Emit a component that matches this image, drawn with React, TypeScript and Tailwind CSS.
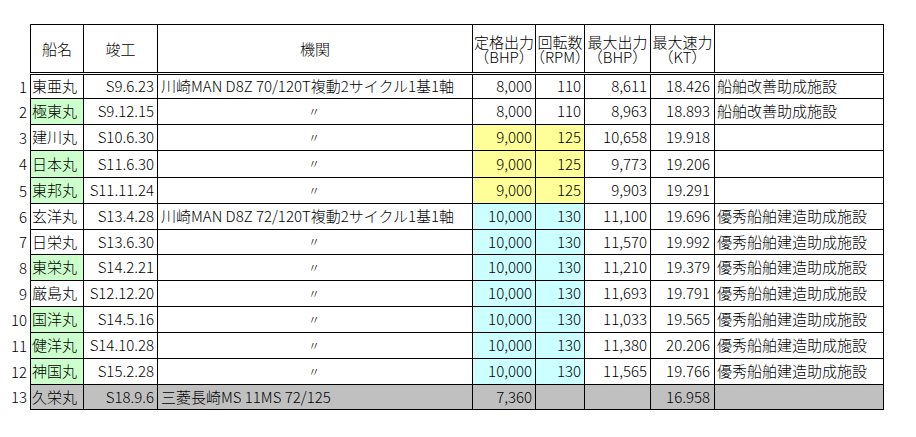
type Ship = {
  no: number;
  name: string;
  done: string;
  engine: string;
  bhp: string;
  rpm: string;
  maxBhp: string;
  kt: string;
  note: string;
  nameBg?: "green";
  powerBg?: "yellow" | "cyan";
  h: string;
  gray?: boolean;
};

const DITTO = "〃";
const NOTE1 = "船舶改善助成施設";
const NOTE2 = "優秀船舶建造助成施設";

const ships: Ship[] = [
  { no: 1, name: "東亜丸", done: "S9.6.23", engine: "川崎MAN D8Z 70/120T複動2サイクル1基1軸", bhp: "8,000", rpm: "110", maxBhp: "8,611", kt: "18.426", note: NOTE1, h: "h-[24px]" },
  { no: 2, name: "極東丸", done: "S9.12.15", engine: DITTO, bhp: "8,000", rpm: "110", maxBhp: "8,963", kt: "18.893", note: NOTE1, nameBg: "green", h: "h-[26px]" },
  { no: 3, name: "建川丸", done: "S10.6.30", engine: DITTO, bhp: "9,000", rpm: "125", maxBhp: "10,658", kt: "19.918", note: "", powerBg: "yellow", h: "h-[26px]" },
  { no: 4, name: "日本丸", done: "S11.6.30", engine: DITTO, bhp: "9,000", rpm: "125", maxBhp: "9,773", kt: "19.206", note: "", nameBg: "green", powerBg: "yellow", h: "h-[27px]" },
  { no: 5, name: "東邦丸", done: "S11.11.24", engine: DITTO, bhp: "9,000", rpm: "125", maxBhp: "9,903", kt: "19.291", note: "", nameBg: "green", powerBg: "yellow", h: "h-[26px]" },
  { no: 6, name: "玄洋丸", done: "S13.4.28", engine: "川崎MAN D8Z 72/120T複動2サイクル1基1軸", bhp: "10,000", rpm: "130", maxBhp: "11,100", kt: "19.696", note: NOTE2, powerBg: "cyan", h: "h-[26px]" },
  { no: 7, name: "日栄丸", done: "S13.6.30", engine: DITTO, bhp: "10,000", rpm: "130", maxBhp: "11,570", kt: "19.992", note: NOTE2, powerBg: "cyan", h: "h-[25px]" },
  { no: 8, name: "東栄丸", done: "S14.2.21", engine: DITTO, bhp: "10,000", rpm: "130", maxBhp: "11,210", kt: "19.379", note: NOTE2, nameBg: "green", powerBg: "cyan", h: "h-[26px]" },
  { no: 9, name: "厳島丸", done: "S12.12.20", engine: DITTO, bhp: "10,000", rpm: "130", maxBhp: "11,693", kt: "19.791", note: NOTE2, powerBg: "cyan", h: "h-[26px]" },
  { no: 10, name: "国洋丸", done: "S14.5.16", engine: DITTO, bhp: "10,000", rpm: "130", maxBhp: "11,033", kt: "19.565", note: NOTE2, nameBg: "green", powerBg: "cyan", h: "h-[26px]" },
  { no: 11, name: "健洋丸", done: "S14.10.28", engine: DITTO, bhp: "10,000", rpm: "130", maxBhp: "11,380", kt: "20.206", note: NOTE2, nameBg: "green", powerBg: "cyan", h: "h-[26px]" },
  { no: 12, name: "神国丸", done: "S15.2.28", engine: DITTO, bhp: "10,000", rpm: "130", maxBhp: "11,565", kt: "19.766", note: NOTE2, nameBg: "green", powerBg: "cyan", h: "h-[26px]" },
  { no: 13, name: "久栄丸", done: "S18.9.6", engine: "三菱長崎MS 11MS 72/125", bhp: "7,360", rpm: "", maxBhp: "", kt: "16.958", note: "", gray: true, h: "h-[25px]" },
];

const cell = "border-r border-black flex items-center whitespace-nowrap";

function Row({ s }: { s: Ship }) {
  const rowBg = s.gray ? "bg-[#c0c0c0]" : "";
  const nameBg = s.gray ? "bg-[#c0c0c0]" : s.nameBg === "green" ? "bg-[#ccffcc]" : "bg-white";
  const powerBg = s.gray
    ? "bg-[#c0c0c0]"
    : s.powerBg === "yellow"
    ? "bg-[#ffff99]"
    : s.powerBg === "cyan"
    ? "bg-[#ccffff]"
    : "bg-white";
  const isDitto = s.engine === DITTO;

  return (
    <div className={`flex ${s.h}`}>
      <div className="w-[30px] pr-[3px] flex items-center justify-end">{s.no}</div>
      <div className={`flex ${rowBg} border-b border-black`}>
        <div className={`${cell} border-l w-[54px] pl-[1px] ${nameBg}`}>{s.name}</div>
        <div className={`${cell} w-[74px] justify-end pr-[3px]`}>{s.done}</div>
        <div className={`${cell} w-[315px] ${isDitto ? "justify-center pr-[2px]" : "pl-[3px]"}`}>
          {isDitto ? <span className="text-[12px]">{s.engine}</span> : s.engine}
        </div>
        <div className={`${cell} w-[63px] justify-end pr-[3px] ${powerBg}`}>{s.bhp}</div>
        <div className={`${cell} w-[49px] justify-end pr-[3px] ${powerBg}`}>{s.rpm}</div>
        <div className={`${cell} w-[66px] justify-end pr-[3px]`}>{s.maxBhp}</div>
        <div className={`${cell} w-[64px] justify-end pr-[4px]`}>{s.kt}</div>
        <div className={`${cell} w-[169px] pl-[2px]`}>{s.note}</div>
      </div>
    </div>
  );
}

function Head({ w, top, sub, first }: { w: string; top: string; sub?: string; first?: boolean }) {
  return (
    <div
      className={`${w} border-r border-black flex flex-col items-center justify-center leading-[15px] ${
        first ? "border-l" : ""
      }`}
    >
      <span>{top}</span>
      {sub && <span>{sub}</span>}
    </div>
  );
}

export default function App() {
  return (
    <div
      className="w-[916px] h-[437px] bg-white text-black text-[15px] font-light pt-[24px]"
      style={{ fontFamily: '"Noto Sans CJK JP", "Noto Sans", sans-serif' }}
    >
      <div className="flex h-[51px]">
        <div className="w-[30px]" />
        <div className="flex border-t border-black border-b-[3px] border-b-black border-double">
          <Head w="w-[54px]" top="船名" first />
          <Head w="w-[74px]" top="竣工" />
          <Head w="w-[315px]" top="機関" />
          <Head w="w-[63px]" top="定格出力" sub="（BHP）" />
          <Head w="w-[49px]" top="回転数" sub="（RPM）" />
          <Head w="w-[66px]" top="最大出力" sub="（BHP）" />
          <Head w="w-[64px]" top="最大速力" sub="（KT）" />
          <Head w="w-[169px]" top="" />
        </div>
      </div>
      {ships.map((s) => (
        <Row key={s.no} s={s} />
      ))}
    </div>
  );
}
